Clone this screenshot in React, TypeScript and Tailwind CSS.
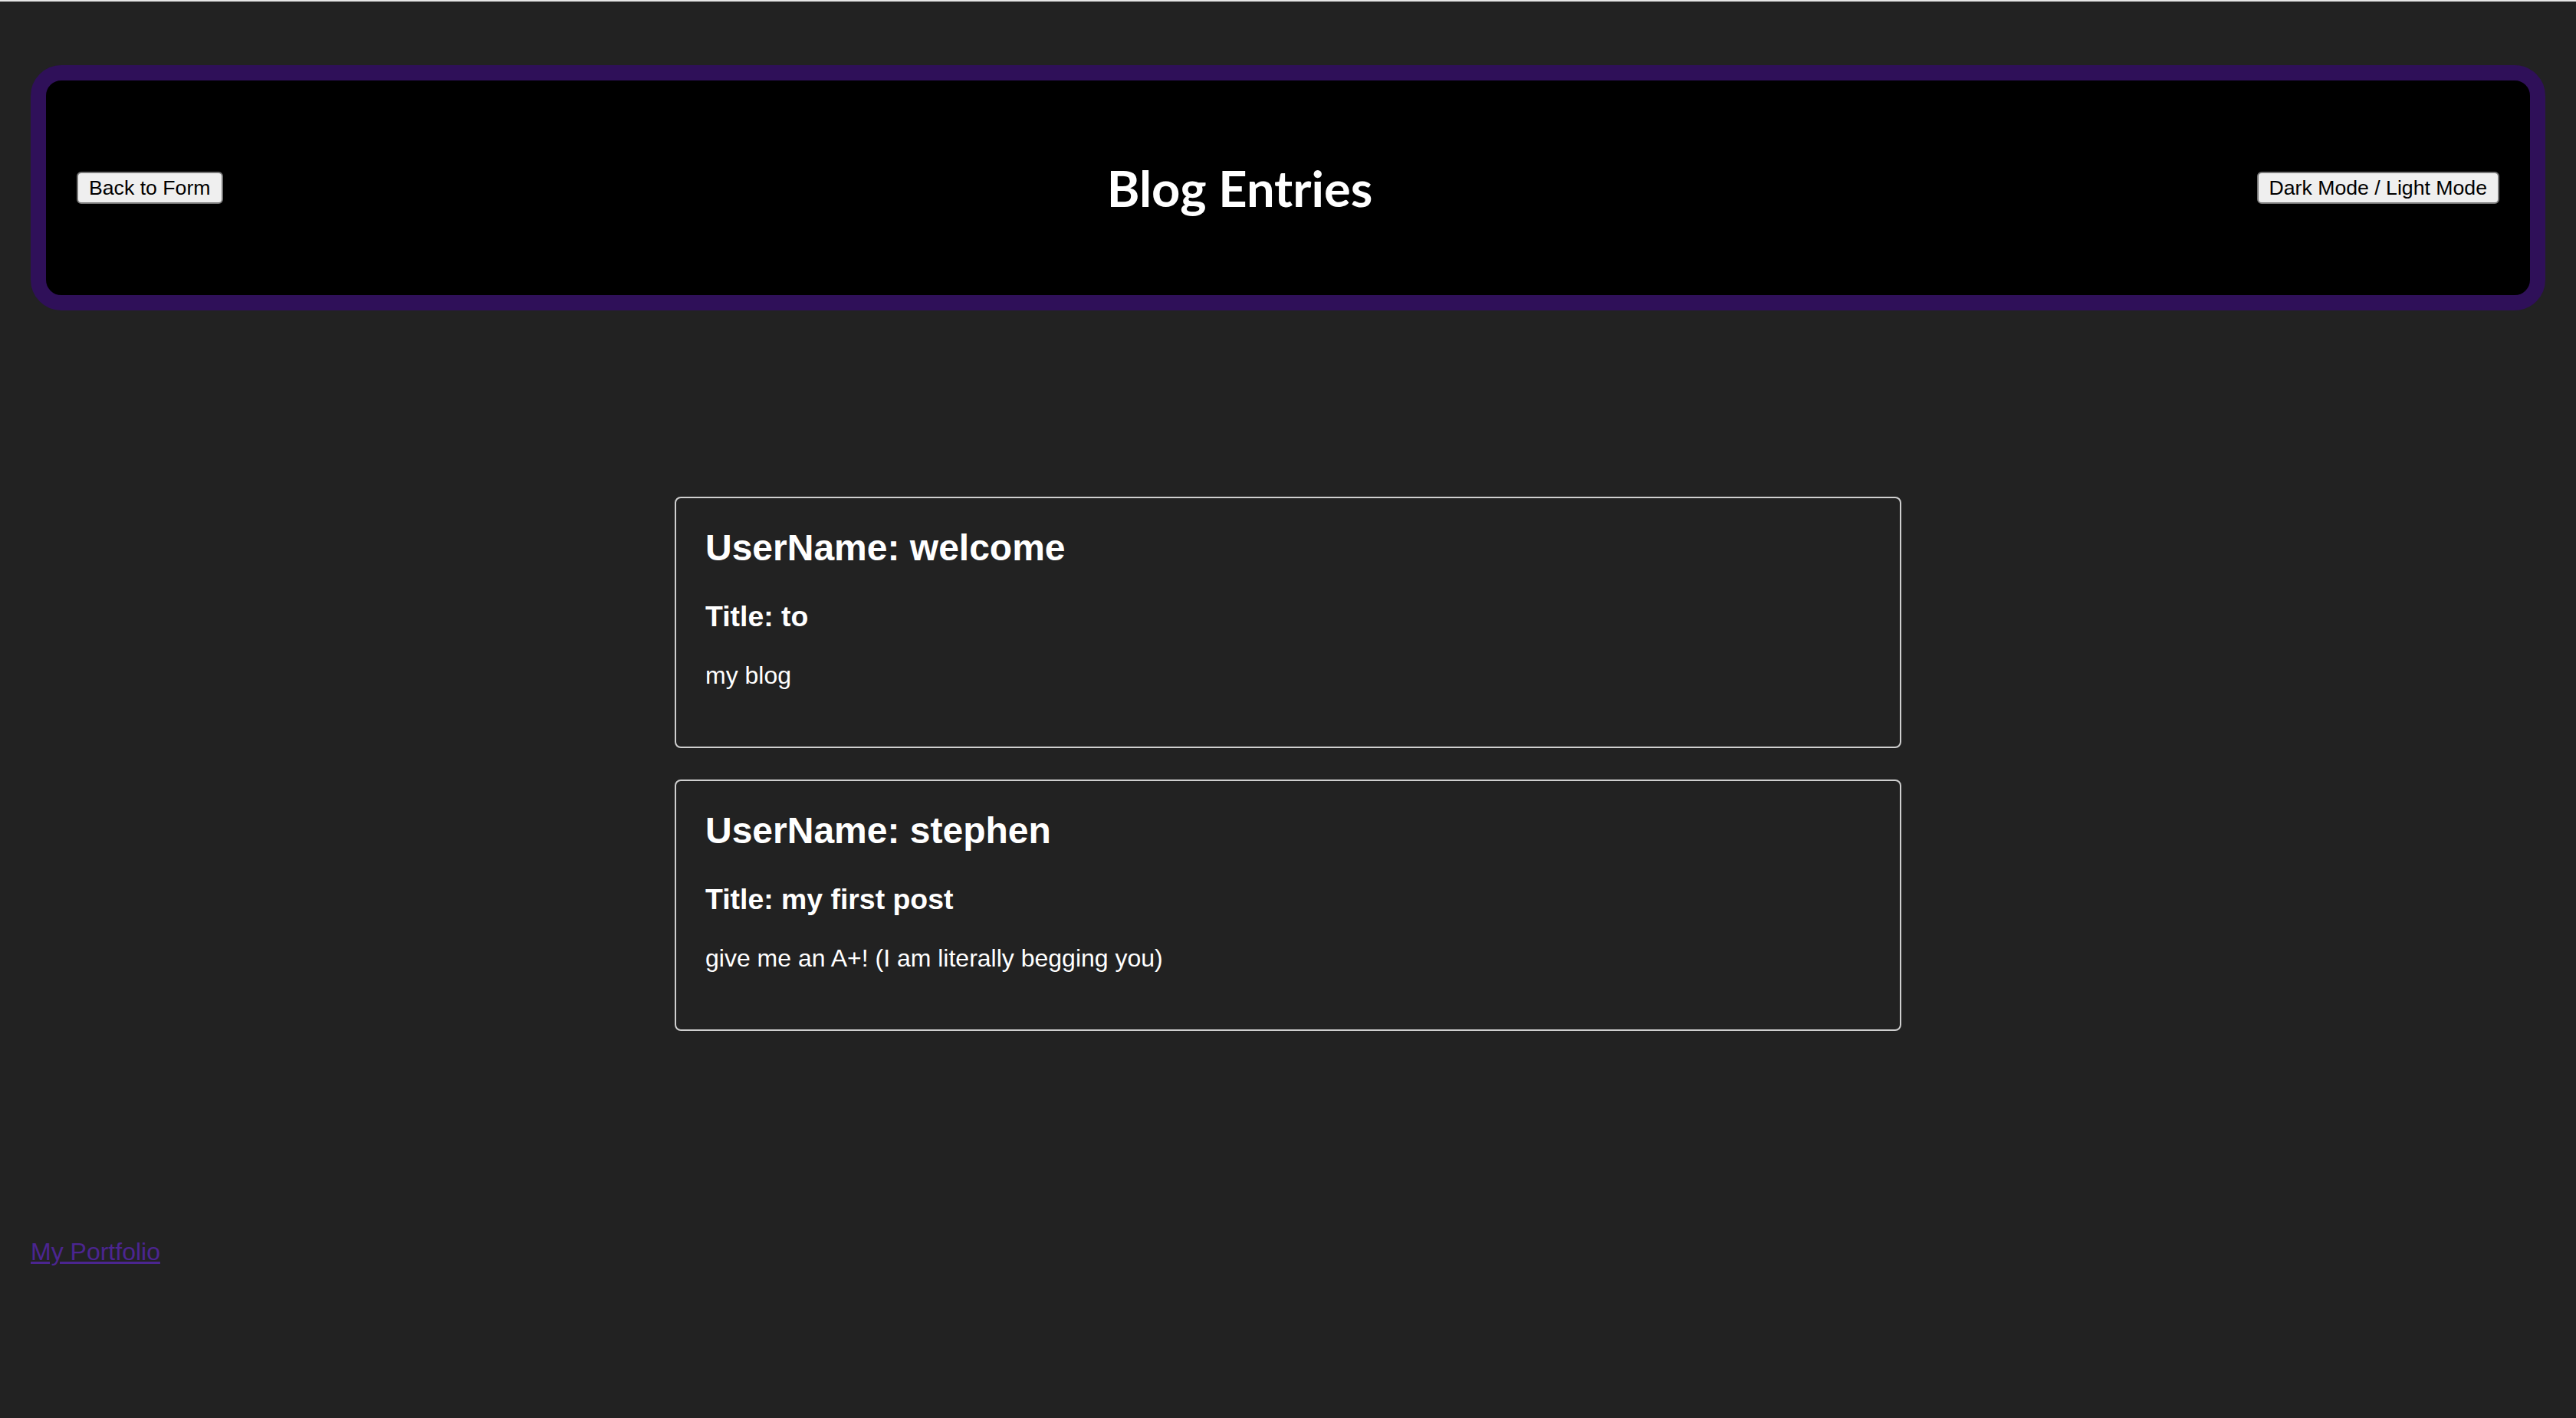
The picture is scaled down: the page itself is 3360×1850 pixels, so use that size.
const entries = [
  { user: "welcome", title: "to", body: "my blog" },
  { user: "stephen", title: "my first post", body: "give me an A+! (I am literally begging you)" },
];

const sans = "font-['Liberation_Sans',Arial,sans-serif]";

function NavButton({ label }: { label: string }) {
  return (
    <button
      type="button"
      className={`${sans} flex h-[42px] items-center rounded-[6px] border-2 border-[#767676] bg-[#efefef] px-[14px] text-[26.67px] leading-none text-black`}
    >
      {label}
    </button>
  );
}

function EntryCard({ user, title, body }: { user: string; title: string; body: string }) {
  return (
    <article className="rounded-[8px] border-2 border-[#cfcfcf] px-[38px] pt-[37px] pb-[74px] text-white">
      <h2 className="text-[48px] leading-[56px] font-bold">UserName: {user}</h2>
      <h3 className="mt-[40px] text-[37.4px] leading-[43px] font-bold">Title: {title}</h3>
      <p className="mt-[37px] text-[32px] leading-[37px]">{body}</p>
    </article>
  );
}

export default function App() {
  return (
    <div className={`${sans} min-h-screen bg-[#222222]`}>
      <div className="h-[2px] bg-[#e6e6e6]" />

      {/* header bar: purple frame round a black panel */}
      <header className="mx-[40px] mt-[83px] rounded-[40px] border-[20px] border-[#2f1059] bg-black">
        <div className="flex h-[280px] items-center justify-between px-[40px]">
          <NavButton label="Back to Form" />
          <h1 className="font-['Lato',sans-serif] text-[65px] leading-none font-bold text-white">
            Blog Entries
          </h1>
          <NavButton label="Dark Mode / Light Mode" />
        </div>
      </header>

      <main className="mx-auto mt-[243px] flex w-[1600px] flex-col gap-[41px]">
        {entries.map((e) => (
          <EntryCard key={e.user} {...e} />
        ))}
      </main>

      <footer className="mt-[270px] px-[40px]">
        <a href="#" className="text-[32px] leading-[37px] text-[#4b2590] underline">
          My Portfolio
        </a>
      </footer>
    </div>
  );
}
